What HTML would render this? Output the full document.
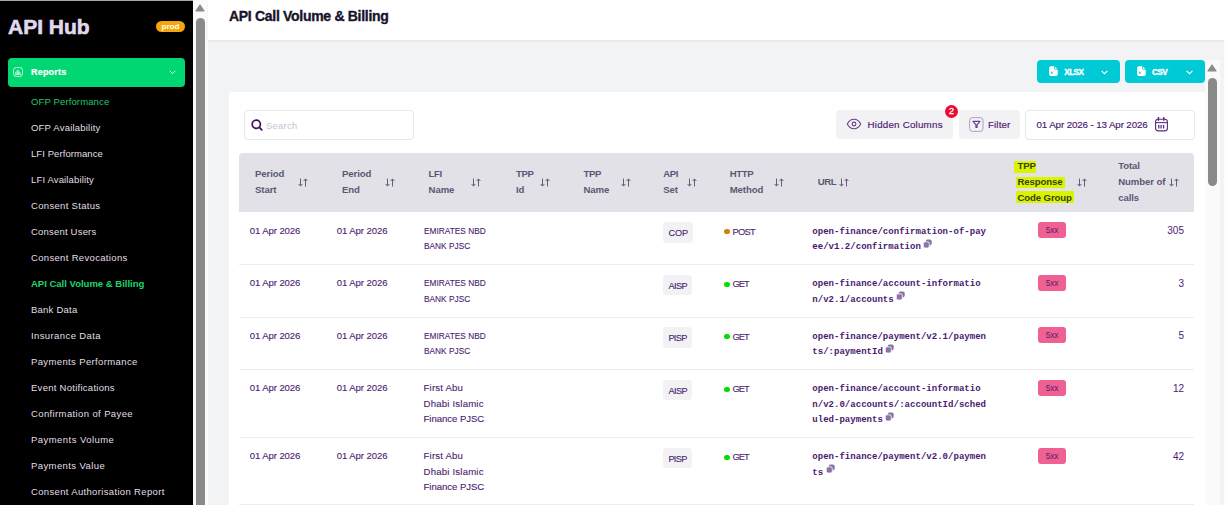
<!DOCTYPE html><html><head><meta charset="utf-8"><style>
*{margin:0;padding:0;box-sizing:border-box}
html,body{width:1228px;height:505px;overflow:hidden;background:#f2f3f5;font-family:"Liberation Sans",sans-serif}
.a{position:absolute;white-space:nowrap;line-height:1}
.menu{position:absolute;left:31px;font-size:9.5px;color:#e2dfe6;line-height:1;white-space:nowrap;letter-spacing:0.3px}
.btn-x{position:absolute;top:60px;height:23px;background:#00cad6;border-radius:4px}
.th{position:absolute;font-size:9.6px;font-weight:bold;color:#5b5873;line-height:15.6px;white-space:nowrap;letter-spacing:-0.1px}
.td{position:absolute;font-size:9.6px;color:#4a1a70;line-height:15.65px;white-space:nowrap;-webkit-text-stroke:0.1px #4a1a70}
.url{position:absolute;left:812.3px;font-family:"Liberation Mono",monospace;font-weight:bold;font-size:9.05px;color:#4a1a70;line-height:15.5px;white-space:nowrap}
.rowline{position:absolute;left:239px;width:955px;height:1px;background:#ecebf1}
.badge{position:absolute;left:663px;width:30px;height:20.8px;background:#f2f2f5;border-radius:3.5px;font-size:9.2px;color:#4a1a70;text-align:center;line-height:22.2px;padding-left:0.5px;-webkit-text-stroke:0.1px #4a1a70}
.dot{position:absolute;left:724.3px;width:5.3px;height:5.3px;border-radius:50%}
.meth{position:absolute;left:732.5px;font-size:9.4px;color:#4a1a70;line-height:1;white-space:nowrap;letter-spacing:-1.05px;-webkit-text-stroke:0.1px #4a1a70}
.x5{position:absolute;left:1038px;width:28px;height:16px;background:#ef6193;border-radius:3px;font-size:8.2px;color:#561a6c;text-align:center;line-height:17.9px;letter-spacing:-0.15px}
.num{position:absolute;right:44px;font-size:10px;color:#4a1a70;line-height:1;white-space:nowrap}
svg{position:absolute}
</style></head><body>
<div style="position:absolute;left:0;top:0;width:193px;height:505px;background:#000;border-top:1px solid #a8a8a8"></div>
<div class="a" style="left:8px;top:15.9px;font-size:21px;font-weight:bold;color:#e0d9ee;-webkit-text-stroke:0.6px #e0d9ee">API Hub</div>
<div style="position:absolute;left:156px;top:21px;width:29px;height:11px;background:#f5a60a;border-radius:6px;color:#fff;font-size:8px;font-weight:bold;text-align:center;line-height:11px">prod</div>
<div style="position:absolute;left:8px;top:58px;width:177px;height:29px;background:#00d672;border-radius:4px"></div>
<svg style="left:13px;top:67px" width="10" height="10" viewBox="0 0 10 10"><rect x="0.5" y="0.5" width="9" height="9" rx="2.8" fill="none" stroke="#d8fbe6" stroke-width="0.9"/><path d="M2.6 7.4V5.6A0.8 0.8 0 0 1 4.2 5.6V7.4M4.2 7.4V4A0.8 0.8 0 0 1 5.8 4V7.4M5.8 7.4V6.2A0.8 0.8 0 0 1 7.4 6.2V7.4M2.3 7.5H7.7" stroke="#d8fbe6" stroke-width="0.8" fill="none"/></svg>
<div class="a" style="left:31px;top:67.5px;font-size:9px;font-weight:bold;color:#fff;letter-spacing:0.2px;-webkit-text-stroke:0.2px #fff">Reports</div>
<svg style="left:169px;top:70px" width="7" height="5" viewBox="0 0 7 5"><path d="M0.7 0.8L3.5 3.6L6.3 0.8" stroke="#e8fff2" stroke-width="1" fill="none"/></svg>
<div class="menu" style="top:97.36px;letter-spacing:0.13px;color:#1fc76a">OFP Performance</div>
<div class="menu" style="top:123.36px;letter-spacing:0.21px">OFP Availability</div>
<div class="menu" style="top:149.36px;letter-spacing:0.075px">LFI Performance</div>
<div class="menu" style="top:175.36px;letter-spacing:0.15px">LFI Availability</div>
<div class="menu" style="top:201.36px;letter-spacing:0.32px">Consent Status</div>
<div class="menu" style="top:227.36px;letter-spacing:0.2px">Consent Users</div>
<div class="menu" style="top:253.36px;letter-spacing:0.33px">Consent Revocations</div>
<div class="menu" style="top:279.36px;letter-spacing:0px;color:#1fd66f;font-weight:bold;letter-spacing:0px">API Call Volume &amp; Billing</div>
<div class="menu" style="top:305.36px;letter-spacing:0.23px">Bank Data</div>
<div class="menu" style="top:331.36px;letter-spacing:0.4px">Insurance Data</div>
<div class="menu" style="top:357.36px;letter-spacing:0.37px">Payments Performance</div>
<div class="menu" style="top:383.36px;letter-spacing:0.27px">Event Notifications</div>
<div class="menu" style="top:409.36px;letter-spacing:0.38px">Confirmation of Payee</div>
<div class="menu" style="top:435.36px;letter-spacing:0.45px">Payments Volume</div>
<div class="menu" style="top:461.36px;letter-spacing:0.4px">Payments Value</div>
<div class="menu" style="top:487.36px;letter-spacing:0.34px">Consent Authorisation Report</div>
<div style="position:absolute;left:193px;top:0;width:15px;height:505px;background:#fafafa"></div>
<svg style="left:195.3px;top:4px" width="10" height="8" viewBox="0 0 10 8"><path d="M5 1L9 7H1Z" fill="#8a8a8a" stroke="#8a8a8a" stroke-width="1.2" stroke-linejoin="round"/></svg>
<div style="position:absolute;left:196px;top:18px;width:9px;height:500px;background:#8a8a8a;border-radius:4.5px"></div>
<div style="position:absolute;left:208px;top:0;width:1020px;height:39.5px;background:#fff;box-shadow:0 1.5px 3px rgba(0,0,0,0.06)"></div>
<div class="a" style="left:229px;top:8.65px;font-size:14px;font-weight:bold;color:#17142b;letter-spacing:-0.3px;-webkit-text-stroke:0.35px #17142b">API Call Volume &amp; Billing</div>
<div style="position:absolute;left:1224px;top:39px;width:4px;height:466px;background:#fdfdfd"></div>
<div class="btn-x" style="left:1037px;width:83px"></div>
<div class="btn-x" style="left:1125px;width:80px"></div>
<svg style="left:1049px;top:66px" width="9" height="10" viewBox="0 0 9 10"><path d="M2 0.2H5.4L8.8 3.6V8A1.9 1.9 0 0 1 6.9 9.9H2A1.9 1.9 0 0 1 0.1 8V2.1A1.9 1.9 0 0 1 2 0.2Z" fill="#fff"/><path d="M5.5 0.2V2.2A1.3 1.3 0 0 0 6.8 3.5H8.8" stroke="#00cad6" stroke-width="0.8" fill="none"/><path d="M2.9 4.9C2.4 5.8 2 6.4 2 6.9A0.9 0.9 0 0 0 3.8 6.9C3.8 6.4 3.4 5.8 2.9 4.9Z" fill="#00cad6"/></svg>
<div class="a" style="left:1064.3px;top:68.86px;font-size:8.2px;font-weight:bold;color:#fff;letter-spacing:-0.6px;-webkit-text-stroke:0.35px #fff">XLSX</div>
<svg style="left:1100.5px;top:69.5px" width="7" height="5" viewBox="0 0 7 5"><path d="M0.6 0.8L3.5 3.7L6.4 0.8" stroke="#fff" stroke-width="1.2" fill="none"/></svg>
<svg style="left:1136.5px;top:66px" width="9" height="10" viewBox="0 0 9 10"><path d="M2 0.2H5.4L8.8 3.6V8A1.9 1.9 0 0 1 6.9 9.9H2A1.9 1.9 0 0 1 0.1 8V2.1A1.9 1.9 0 0 1 2 0.2Z" fill="#fff"/><path d="M5.5 0.2V2.2A1.3 1.3 0 0 0 6.8 3.5H8.8" stroke="#00cad6" stroke-width="0.8" fill="none"/><path d="M2.9 4.9C2.4 5.8 2 6.4 2 6.9A0.9 0.9 0 0 0 3.8 6.9C3.8 6.4 3.4 5.8 2.9 4.9Z" fill="#00cad6"/></svg>
<div class="a" style="left:1152px;top:68.86px;font-size:8.2px;font-weight:bold;color:#fff;letter-spacing:-0.6px;-webkit-text-stroke:0.35px #fff">CSV</div>
<svg style="left:1186px;top:69.5px" width="7" height="5" viewBox="0 0 7 5"><path d="M0.6 0.8L3.5 3.7L6.4 0.8" stroke="#fff" stroke-width="1.2" fill="none"/></svg>
<div style="position:absolute;left:229px;top:92px;width:976px;height:420px;background:#fff;border-radius:3px"></div>
<div style="position:absolute;left:244px;top:110px;width:170px;height:30px;border:1px solid #e8e7ed;border-radius:4px;background:#fff"></div>
<svg style="left:250.5px;top:119.3px" width="12" height="12" viewBox="0 0 12 12"><circle cx="5.3" cy="5.3" r="4.1" fill="none" stroke="#3d0f5c" stroke-width="1.7"/><path d="M8.3 8.3L10.8 10.8" stroke="#3d0f5c" stroke-width="1.7" stroke-linecap="round"/></svg>
<div class="a" style="left:266px;top:122.2px;font-size:9.3px;color:#c5bfd3;letter-spacing:0.35px">Search</div>
<div style="position:absolute;left:836px;top:110px;width:117px;height:29px;background:#f2f2f5;border-radius:4px"></div>
<div class="a" style="left:867.5px;top:120.2px;font-size:9.8px;letter-spacing:0.2px;-webkit-text-stroke:0.15px #4a1a70;color:#4a1a70">Hidden Columns</div>
<div style="position:absolute;left:945px;top:105.3px;width:13px;height:13px;border-radius:50%;background:#ec0a2e;color:#fff;font-size:9px;-webkit-text-stroke:0.3px #fff;text-align:center;line-height:13px">2</div>
<svg style="left:846.4px;top:118.2px" width="16" height="12" viewBox="0 0 16 12"><path d="M1.3 6C3 2.6 5.3 1.2 8 1.2S13 2.6 14.7 6C13 9.4 10.7 10.8 8 10.8S3 9.4 1.3 6Z" fill="none" stroke="#6a3d8f" stroke-width="1.1"/><circle cx="8" cy="6" r="1.9" fill="none" stroke="#6a3d8f" stroke-width="1.1"/></svg>
<div style="position:absolute;left:959px;top:110px;width:61px;height:29px;background:#f2f2f5;border-radius:4px"></div>
<div class="a" style="left:988px;top:120.2px;font-size:9.8px;letter-spacing:0.1px;-webkit-text-stroke:0.15px #4a1a70;color:#4a1a70">Filter</div>
<div style="position:absolute;left:1025px;top:110px;width:170px;height:30px;border:1px solid #e8e7ed;border-radius:4px;background:#fff"></div>
<div class="a" style="left:1036.5px;top:120.2px;font-size:9.8px;-webkit-text-stroke:0.15px #4a1a70;color:#4a1a70;letter-spacing:-0.13px">01 Apr 2026 - 13 Apr 2026</div>
<svg style="left:968.5px;top:117px" width="15" height="15" viewBox="0 0 15 15"><rect x="0.6" y="0.6" width="13.4" height="13.8" rx="3" fill="none" stroke="#a895bd" stroke-width="0.9"/><path d="M4 4.4H11L8.1 7.6V10.4H6.9V7.6Z" fill="none" stroke="#6a3d8f" stroke-width="1.1" stroke-linejoin="round"/></svg>
<svg style="left:1155px;top:117px" width="13" height="15" viewBox="0 0 13 15"><rect x="0.6" y="2.2" width="11.8" height="11.7" rx="2.6" fill="none" stroke="#5a2d82" stroke-width="1.1"/><path d="M0.6 5.6H12.4" stroke="#5a2d82" stroke-width="1.1"/><path d="M3.4 0.5V3.2M8.8 0.5V3.2" stroke="#5a2d82" stroke-width="1.5" stroke-linecap="round"/><path d="M3.8 8.1V11.5M6.1 8.1V11.5M8.6 8.1V11.5" stroke="#5a2d82" stroke-width="1.3"/></svg>
<div style="position:absolute;left:239px;top:153px;width:955px;height:59px;background:#e2e1e8;border-radius:4px 4px 0 0"></div>
<div class="th" style="left:255px;top:166.27px">Period<br>Start</div>
<svg style="left:298.4px;top:178px" width="10" height="9" viewBox="0 0 10 9"><path d="M2.5 0.5V8M0.6 6L2.5 8.1L4.4 6M7.5 8.5V1M5.6 3L7.5 0.9L9.4 3" stroke="#625f78" stroke-width="1.0" fill="none"/></svg>
<div class="th" style="left:342px;top:166.27px">Period<br>End</div>
<svg style="left:384.8px;top:178px" width="10" height="9" viewBox="0 0 10 9"><path d="M2.5 0.5V8M0.6 6L2.5 8.1L4.4 6M7.5 8.5V1M5.6 3L7.5 0.9L9.4 3" stroke="#625f78" stroke-width="1.0" fill="none"/></svg>
<div class="th" style="left:428.6px;top:166.27px"><span style="letter-spacing:-0.4px">LFI</span><br>Name</div>
<svg style="left:471px;top:178px" width="10" height="9" viewBox="0 0 10 9"><path d="M2.5 0.5V8M0.6 6L2.5 8.1L4.4 6M7.5 8.5V1M5.6 3L7.5 0.9L9.4 3" stroke="#625f78" stroke-width="1.0" fill="none"/></svg>
<div class="th" style="left:516px;top:166.27px"><span style="letter-spacing:-0.4px">TPP</span><br>Id</div>
<svg style="left:540px;top:178px" width="10" height="9" viewBox="0 0 10 9"><path d="M2.5 0.5V8M0.6 6L2.5 8.1L4.4 6M7.5 8.5V1M5.6 3L7.5 0.9L9.4 3" stroke="#625f78" stroke-width="1.0" fill="none"/></svg>
<div class="th" style="left:583.5px;top:166.27px"><span style="letter-spacing:-0.4px">TPP</span><br>Name</div>
<svg style="left:620.7px;top:178px" width="10" height="9" viewBox="0 0 10 9"><path d="M2.5 0.5V8M0.6 6L2.5 8.1L4.4 6M7.5 8.5V1M5.6 3L7.5 0.9L9.4 3" stroke="#625f78" stroke-width="1.0" fill="none"/></svg>
<div class="th" style="left:663.3px;top:166.27px"><span style="letter-spacing:-0.4px">API</span><br>Set</div>
<svg style="left:687px;top:178px" width="10" height="9" viewBox="0 0 10 9"><path d="M2.5 0.5V8M0.6 6L2.5 8.1L4.4 6M7.5 8.5V1M5.6 3L7.5 0.9L9.4 3" stroke="#625f78" stroke-width="1.0" fill="none"/></svg>
<div class="th" style="left:729.7px;top:166.27px"><span style="letter-spacing:-0.4px">HTTP</span><br>Method</div>
<svg style="left:774px;top:178px" width="10" height="9" viewBox="0 0 10 9"><path d="M2.5 0.5V8M0.6 6L2.5 8.1L4.4 6M7.5 8.5V1M5.6 3L7.5 0.9L9.4 3" stroke="#625f78" stroke-width="1.0" fill="none"/></svg>
<div class="th" style="left:817.7px;top:174.07px;letter-spacing:-0.45px">URL</div>
<svg style="left:838.6px;top:178px" width="10" height="9" viewBox="0 0 10 9"><path d="M2.5 0.5V8M0.6 6L2.5 8.1L4.4 6M7.5 8.5V1M5.6 3L7.5 0.9L9.4 3" stroke="#625f78" stroke-width="1.0" fill="none"/></svg>
<div style="position:absolute;left:1013.6px;top:161px;width:22.9px;height:11.7px;background:#d8f400;border-radius:1px"></div>
<div style="position:absolute;left:1015.6px;top:176.5px;width:49.1px;height:11.5px;background:#d8f400;border-radius:1px"></div>
<div style="position:absolute;left:1015.6px;top:190.7px;width:58.5px;height:12.3px;background:#d8f400;border-radius:1px"></div>
<div class="th" style="left:1017.4px;top:158.47px;color:#3b3d1a">TPP<br>Response<br>Code Group</div>
<svg style="left:1076.9px;top:178px" width="10" height="9" viewBox="0 0 10 9"><path d="M2.5 0.5V8M0.6 6L2.5 8.1L4.4 6M7.5 8.5V1M5.6 3L7.5 0.9L9.4 3" stroke="#625f78" stroke-width="1.0" fill="none"/></svg>
<div class="th" style="left:1118.2px;top:158.47px">Total<br>Number of<br>calls</div>
<svg style="left:1169.2px;top:178px" width="10" height="9" viewBox="0 0 10 9"><path d="M2.5 0.5V8M0.6 6L2.5 8.1L4.4 6M7.5 8.5V1M5.6 3L7.5 0.9L9.4 3" stroke="#625f78" stroke-width="1.0" fill="none"/></svg>
<div class="td" style="left:249.7px;top:222.65px;letter-spacing:-0.1px">01 Apr 2026</div>
<div class="td" style="left:336.8px;top:222.65px;letter-spacing:-0.1px">01 Apr 2026</div>
<div class="td" style="left:423.5px;top:222.65px;transform:scaleX(0.866);transform-origin:0 0">EMIRATES NBD<br>BANK PJSC</div>
<div class="badge" style="top:222.20px;width:30px;letter-spacing:-0.1px">COP</div>
<div class="dot" style="top:229.00px;background:#d2800a"></div>
<div class="meth" style="top:226.74px;letter-spacing:-0.75px">POST</div>
<div class="url" style="top:223.84px">open-finance/confirmation-of-pay<br>ee/v1.2/confirmation</div>
<svg style="left:923.4px;top:238.7px" width="9" height="9" viewBox="0 0 9 9"><rect x="2.7" y="0.4" width="6" height="6" rx="1.8" fill="#8b74a5"/><rect x="0.3" y="2.8" width="6" height="6.2" rx="1.8" fill="#8b74a5" stroke="#fff" stroke-width="0.8"/></svg>
<div class="x5" style="top:222.00px">5xx</div>
<div class="num" style="top:226.13px">305</div>
<div class="td" style="left:249.7px;top:275.15px;letter-spacing:-0.1px">01 Apr 2026</div>
<div class="td" style="left:336.8px;top:275.15px;letter-spacing:-0.1px">01 Apr 2026</div>
<div class="td" style="left:423.5px;top:275.15px;transform:scaleX(0.866);transform-origin:0 0">EMIRATES NBD<br>BANK PJSC</div>
<div class="badge" style="top:274.70px;width:29px;letter-spacing:-0.6px">AISP</div>
<div class="dot" style="top:281.50px;background:#00e000"></div>
<div class="meth" style="top:279.24px;letter-spacing:-1.05px">GET</div>
<div class="url" style="top:276.34px">open-finance/account-informatio<br>n/v2.1/accounts</div>
<svg style="left:896.2px;top:291.2px" width="9" height="9" viewBox="0 0 9 9"><rect x="2.7" y="0.4" width="6" height="6" rx="1.8" fill="#8b74a5"/><rect x="0.3" y="2.8" width="6" height="6.2" rx="1.8" fill="#8b74a5" stroke="#fff" stroke-width="0.8"/></svg>
<div class="x5" style="top:274.50px">5xx</div>
<div class="num" style="top:278.64px">3</div>
<div class="td" style="left:249.7px;top:327.65px;letter-spacing:-0.1px">01 Apr 2026</div>
<div class="td" style="left:336.8px;top:327.65px;letter-spacing:-0.1px">01 Apr 2026</div>
<div class="td" style="left:423.5px;top:327.65px;transform:scaleX(0.866);transform-origin:0 0">EMIRATES NBD<br>BANK PJSC</div>
<div class="badge" style="top:327.20px;width:28.5px;letter-spacing:-0.7px">PISP</div>
<div class="dot" style="top:334.00px;background:#00e000"></div>
<div class="meth" style="top:331.74px;letter-spacing:-1.05px">GET</div>
<div class="url" style="top:328.84px">open-finance/payment/v2.1/paymen<br>ts/:paymentId</div>
<svg style="left:885.4px;top:343.7px" width="9" height="9" viewBox="0 0 9 9"><rect x="2.7" y="0.4" width="6" height="6" rx="1.8" fill="#8b74a5"/><rect x="0.3" y="2.8" width="6" height="6.2" rx="1.8" fill="#8b74a5" stroke="#fff" stroke-width="0.8"/></svg>
<div class="x5" style="top:327.00px">5xx</div>
<div class="num" style="top:331.14px">5</div>
<div class="td" style="left:249.7px;top:380.15px;letter-spacing:-0.1px">01 Apr 2026</div>
<div class="td" style="left:336.8px;top:380.15px;letter-spacing:-0.1px">01 Apr 2026</div>
<div class="td" style="left:423.5px;top:380.15px;letter-spacing:0.2px">First Abu<br>Dhabi Islamic<br><span style="letter-spacing:-0.05px">Finance PJSC</span></div>
<div class="badge" style="top:379.70px;width:29px;letter-spacing:-0.6px">AISP</div>
<div class="dot" style="top:386.50px;background:#00e000"></div>
<div class="meth" style="top:384.24px;letter-spacing:-1.05px">GET</div>
<div class="url" style="top:381.34px">open-finance/account-informatio<br>n/v2.0/accounts/:accountId/sched<br>uled-payments</div>
<svg style="left:885.4px;top:411.7px" width="9" height="9" viewBox="0 0 9 9"><rect x="2.7" y="0.4" width="6" height="6" rx="1.8" fill="#8b74a5"/><rect x="0.3" y="2.8" width="6" height="6.2" rx="1.8" fill="#8b74a5" stroke="#fff" stroke-width="0.8"/></svg>
<div class="x5" style="top:379.50px">5xx</div>
<div class="num" style="top:383.64px">12</div>
<div class="td" style="left:249.7px;top:448.15px;letter-spacing:-0.1px">01 Apr 2026</div>
<div class="td" style="left:336.8px;top:448.15px;letter-spacing:-0.1px">01 Apr 2026</div>
<div class="td" style="left:423.5px;top:448.15px;letter-spacing:0.2px">First Abu<br>Dhabi Islamic<br><span style="letter-spacing:-0.05px">Finance PJSC</span></div>
<div class="badge" style="top:447.70px;width:28.5px;letter-spacing:-0.7px">PISP</div>
<div class="dot" style="top:454.50px;background:#00e000"></div>
<div class="meth" style="top:452.24px;letter-spacing:-1.05px">GET</div>
<div class="url" style="top:449.34px">open-finance/payment/v2.0/paymen<br>ts</div>
<svg style="left:825.7px;top:464.2px" width="9" height="9" viewBox="0 0 9 9"><rect x="2.7" y="0.4" width="6" height="6" rx="1.8" fill="#8b74a5"/><rect x="0.3" y="2.8" width="6" height="6.2" rx="1.8" fill="#8b74a5" stroke="#fff" stroke-width="0.8"/></svg>
<div class="x5" style="top:447.50px">5xx</div>
<div class="num" style="top:451.64px">42</div>
<div class="rowline" style="top:264px"></div>
<div class="rowline" style="top:316.5px"></div>
<div class="rowline" style="top:369px"></div>
<div class="rowline" style="top:437px"></div>
<div class="rowline" style="top:504px"></div>
<div style="position:absolute;left:1205px;top:60px;width:15px;height:445px;background:#fafafa"></div>
<svg style="left:1206.8px;top:64px" width="10" height="8" viewBox="0 0 10 8"><path d="M5 1L9 7H1Z" fill="#8a8a8a" stroke="#8a8a8a" stroke-width="1.2" stroke-linejoin="round"/></svg>
<div style="position:absolute;left:1208px;top:78px;width:9px;height:108px;background:#8a8a8a;border-radius:4.5px"></div>
</body></html>
